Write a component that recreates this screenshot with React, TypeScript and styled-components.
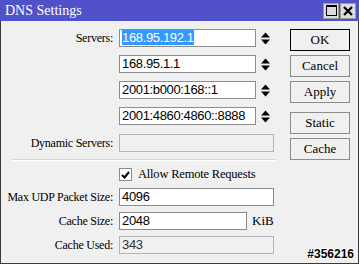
import React from 'react'
import styled, { createGlobalStyle } from 'styled-components'

const Global = createGlobalStyle`
html, body {
  margin: 0;
  padding: 0;
  background: #f0f0f0;
}
`

const servers = ['168.95.192.1', '168.95.1.1', '2001:b000:168::1', '2001:4860:4860::8888']

const Spin = () => (
  <SpinBox>
    <svg width="9" height="13" viewBox="0 0 9 13">
      <path d="M0 5.5 L4.5 0.5 L9 5.5 Z" fill="#000" />
      <path d="M0 7.5 L9 7.5 L4.5 12.5 Z" fill="#000" />
    </svg>
  </SpinBox>
)

const App = () => {
  return (
    <>
      <Global />
      <Window>
        <TitleBar>
          <Title>DNS Settings</Title>
          <TitleButtons>
            <TitleBtn>
              <svg width="11" height="11" viewBox="0 0 11 11">
                <rect x="0.5" y="0.5" width="10" height="10" fill="none" stroke="#000" />
                <rect x="0" y="0" width="11" height="2" fill="#000" />
              </svg>
            </TitleBtn>
            <TitleBtn>
              <svg width="10" height="10" viewBox="0 0 10 10">
                <path d="M1 1 L9 9 M9 1 L1 9" stroke="#000" strokeWidth="2.2" />
              </svg>
            </TitleBtn>
          </TitleButtons>
        </TitleBar>
        <Body>
          <Form>
            {servers.map((s, i) => (
              <Row key={s} gap={i === 0 ? 0 : 8}>
                <Label>{i === 0 ? 'Servers:' : ''}</Label>
                <Field>
                  <Input width={137}>
                    {i === 0 ? <Selected>{s}</Selected> : s}
                  </Input>
                  <Spin />
                </Field>
              </Row>
            ))}
            <Row gap={9}>
              <Label>Dynamic Servers:</Label>
              <Input width={155} disabled />
            </Row>
            <Separator />
            <CheckRow>
              <Check>
                <svg width="9" height="8" viewBox="0 0 9 8">
                  <path d="M1 4 L3.5 6.5 L8 1" stroke="#000" strokeWidth="2" fill="none" />
                </svg>
              </Check>
              <CheckText>Allow Remote Requests</CheckText>
            </CheckRow>
            <Row gap={6}>
              <Label>Max UDP Packet Size:</Label>
              <Input width={155}>4096</Input>
            </Row>
            <Row gap={6}>
              <Label>Cache Size:</Label>
              <Field>
                <Input width={128}>2048</Input>
                <Unit>KiB</Unit>
              </Field>
            </Row>
            <Row gap={6}>
              <Label>Cache Used:</Label>
              <Input width={155} disabled>343</Input>
            </Row>
          </Form>
          <Buttons>
            <Button primary>OK</Button>
            <Button>Cancel</Button>
            <Button>Apply</Button>
            <Button spaced>Static</Button>
            <Button>Cache</Button>
            <Status>#356216</Status>
          </Buttons>
        </Body>
      </Window>
    </>
  )
}

export default App

const Window = styled.div`
width: 359px;
height: 264px;
box-sizing: border-box;
display: flex;
flex-direction: column;
background: #f0f0f0;
border-left: 1px solid #3a3a3a;
border-right: 1px solid #3a3a3a;
border-bottom: 1px solid #3a3a3a;
font-family: "Liberation Serif", "DejaVu Serif", serif;
font-size: 12px;
color: #000;
`
const TitleBar = styled.div`
height: 21px;
margin: 0 -1px;
display: flex;
align-items: center;
justify-content: space-between;
background: #5151c9;
padding: 0 3px 0 5px;
`
const Title = styled.div`
color: #fff;
font-size: 14px;
font-family: "Liberation Serif", serif;
`
const TitleButtons = styled.div`
display: flex;
gap: 1px;
`
const TitleBtn = styled.div`
width: 16px;
height: 16px;
box-sizing: border-box;
background: #dcdcdc;
border: 1px solid #9a9a9a;
display: flex;
align-items: center;
justify-content: center;
`
const Body = styled.div`
flex: 1;
display: flex;
padding-top: 8px;
`
const Form = styled.div`
width: 289px;
flex: none;
display: flex;
flex-direction: column;
`
const Row = styled.div<{ gap: number }>`
display: grid;
grid-template-columns: 112px auto;
column-gap: 6px;
align-items: center;
margin-top: ${p => p.gap}px;
`
const Label = styled.div`
text-align: right;
white-space: nowrap;
letter-spacing: -0.25px;
`
const Field = styled.div`
display: flex;
align-items: center;
`
const Input = styled.div<{ width: number; disabled?: boolean }>`
width: ${p => p.width}px;
height: 18px;
box-sizing: border-box;
border: 1px solid ${p => (p.disabled ? '#b4b4b4' : '#8c8c8c')};
background: ${p => (p.disabled ? '#f0f0f0' : '#fff')};
color: ${p => (p.disabled ? '#333' : '#000')};
font-family: "Liberation Sans", Arial, sans-serif;
font-size: 13px;
letter-spacing: -0.35px;
line-height: 16px;
padding-left: 2px;
white-space: nowrap;
overflow: hidden;
`
const Selected = styled.span`
background: #3399ff;
color: #fff;
`
const SpinBox = styled.div`
margin-left: 5px;
display: flex;
`
const Unit = styled.div`
margin-left: 5px;
font-size: 13px;
`
const Separator = styled.div`
margin: 7px 14px 0 10px;
height: 1px;
background: #d8d8d8;
border-bottom: 1px solid #fff;
`
const CheckRow = styled.div`
display: flex;
align-items: center;
margin: 6px 0 0 118px;
`
const Check = styled.div`
width: 13px;
height: 13px;
box-sizing: border-box;
border: 1px solid #8c8c8c;
background: #fff;
display: flex;
align-items: center;
justify-content: center;
`
const CheckText = styled.div`
margin-left: 6px;
font-size: 12.5px;
letter-spacing: -0.2px;
`
const Buttons = styled.div`
width: 60px;
display: flex;
flex-direction: column;
`
const Button = styled.div<{ primary?: boolean; spaced?: boolean }>`
height: 22px;
box-sizing: border-box;
margin-top: ${p => (p.spaced ? 9 : 4)}px;
&:first-child { margin-top: 0; }
border: 1px solid ${p => (p.primary ? '#000' : '#8c8c8c')};
background: #f0f0f0;
display: flex;
align-items: center;
justify-content: center;
font-size: 13px;
`
const Status = styled.div`
margin-top: auto;
margin-bottom: 2px;
align-self: flex-end;
margin-right: -4px;
font-family: "Liberation Sans", Arial, sans-serif;
font-weight: bold;
font-size: 12px;
color: #000;
text-shadow: 1px 0 #fff, -1px 0 #fff, 0 1px #fff, 0 -1px #fff;
`
